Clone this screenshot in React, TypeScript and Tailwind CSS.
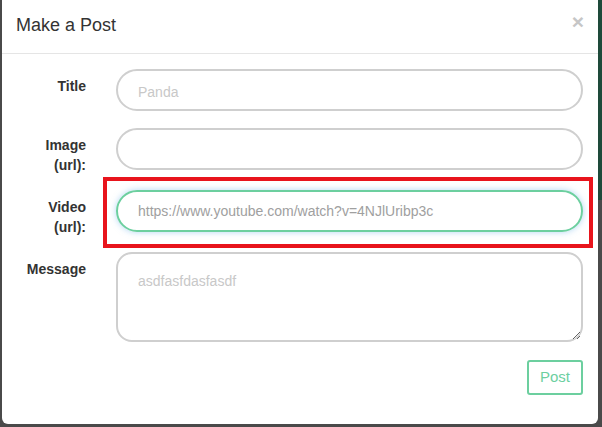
import React from 'react';

const font = { fontFamily: '"Liberation Sans", Arial, sans-serif' };

const Label: React.FC<{ lines: string[] }> = ({ lines }) => (
    <div className="w-[100px] shrink-0 pr-[16px] pt-[7px] text-right text-[14px] leading-[20px] font-bold text-[#333]">
        {lines.map(l => (
            <div key={l}>{l}</div>
        ))}
    </div>
);

const App: React.FC = () => {
    return (
        <div className="w-[602px] h-[427px] bg-[#4a4a4a] overflow-hidden relative" style={font}>
            <div className="absolute right-0 top-0 w-[4px] h-[200px] bg-[#1e4a3a]" />
            <div className="ml-[2px] w-[596px] h-[424px] bg-white rounded-b-[6px] relative">
                <div className="flex items-start justify-between h-[54px] border-b border-[#e5e5e5] pl-[14px] pr-[15px] pt-[13px]">
                    <h4 className="text-[18px] leading-[24px] text-[#333]">Make a Post</h4>
                    <button className="text-[21px] leading-[16px] font-bold text-[#c6c6c6] mt-[1px] mr-[-1px]">×</button>
                </div>

                <div className="pt-[15px] pr-[15px]">
                    <div className="flex mb-[17px]">
                        <Label lines={['Title']} />
                        <div className="flex-1 pl-[14px]">
                            <input
                                readOnly
                                placeholder="Panda"
                                className="w-full h-[42px] rounded-full border-2 border-[#cfcfcf] px-[20px] pt-[3px] text-[14px] placeholder:text-[#c8c8c8] outline-none"
                            />
                        </div>
                    </div>

                    <div className="flex mb-[15px]">
                        <Label lines={['Image', '(url):']} />
                        <div className="flex-1 pl-[14px]">
                            <input
                                readOnly
                                className="w-full h-[42px] rounded-full border-2 border-[#cfcfcf] px-[20px] text-[14px] outline-none"
                            />
                        </div>
                    </div>

                    <div className="flex mb-[15px]">
                        <Label lines={['Video', '(url):']} />
                        <div className="flex-1 pl-[14px] relative">
                            <input
                                readOnly
                                value="https://www.youtube.com/watch?v=4NJlUribp3c"
                                className="w-full h-[42px] rounded-full border-2 border-[#6ccf9f] px-[20px] text-[14px] text-[#a0a0a0] outline-none shadow-[0_0_6px_rgba(102,175,233,0.5)]"
                            />
                            <div className="absolute left-[1px] -right-[10px] -top-[13px] -bottom-[11px] border-4 border-[#e8141c] pointer-events-none" />
                        </div>
                    </div>

                    <div className="flex mb-[17px]">
                        <Label lines={['Message']} />
                        <div className="flex-1 pl-[14px]">
                            <textarea
                                readOnly
                                placeholder="asdfasfdasfasdf"
                                className="block w-full h-[90px] rounded-[16px] border-2 border-[#cfcfcf] px-[20px] pt-[19px] text-[14px] leading-[16px] placeholder:text-[#c8c8c8] outline-none"
                            />
                        </div>
                    </div>

                    <div className="flex justify-end">
                        <button className="w-[56px] h-[35px] mt-[1px] rounded-[3px] border-2 border-[#6ccf9f] text-[15px] text-[#6ccf9f] bg-white">
                            Post
                        </button>
                    </div>
                </div>
            </div>
        </div>
    );
};

export default App;
